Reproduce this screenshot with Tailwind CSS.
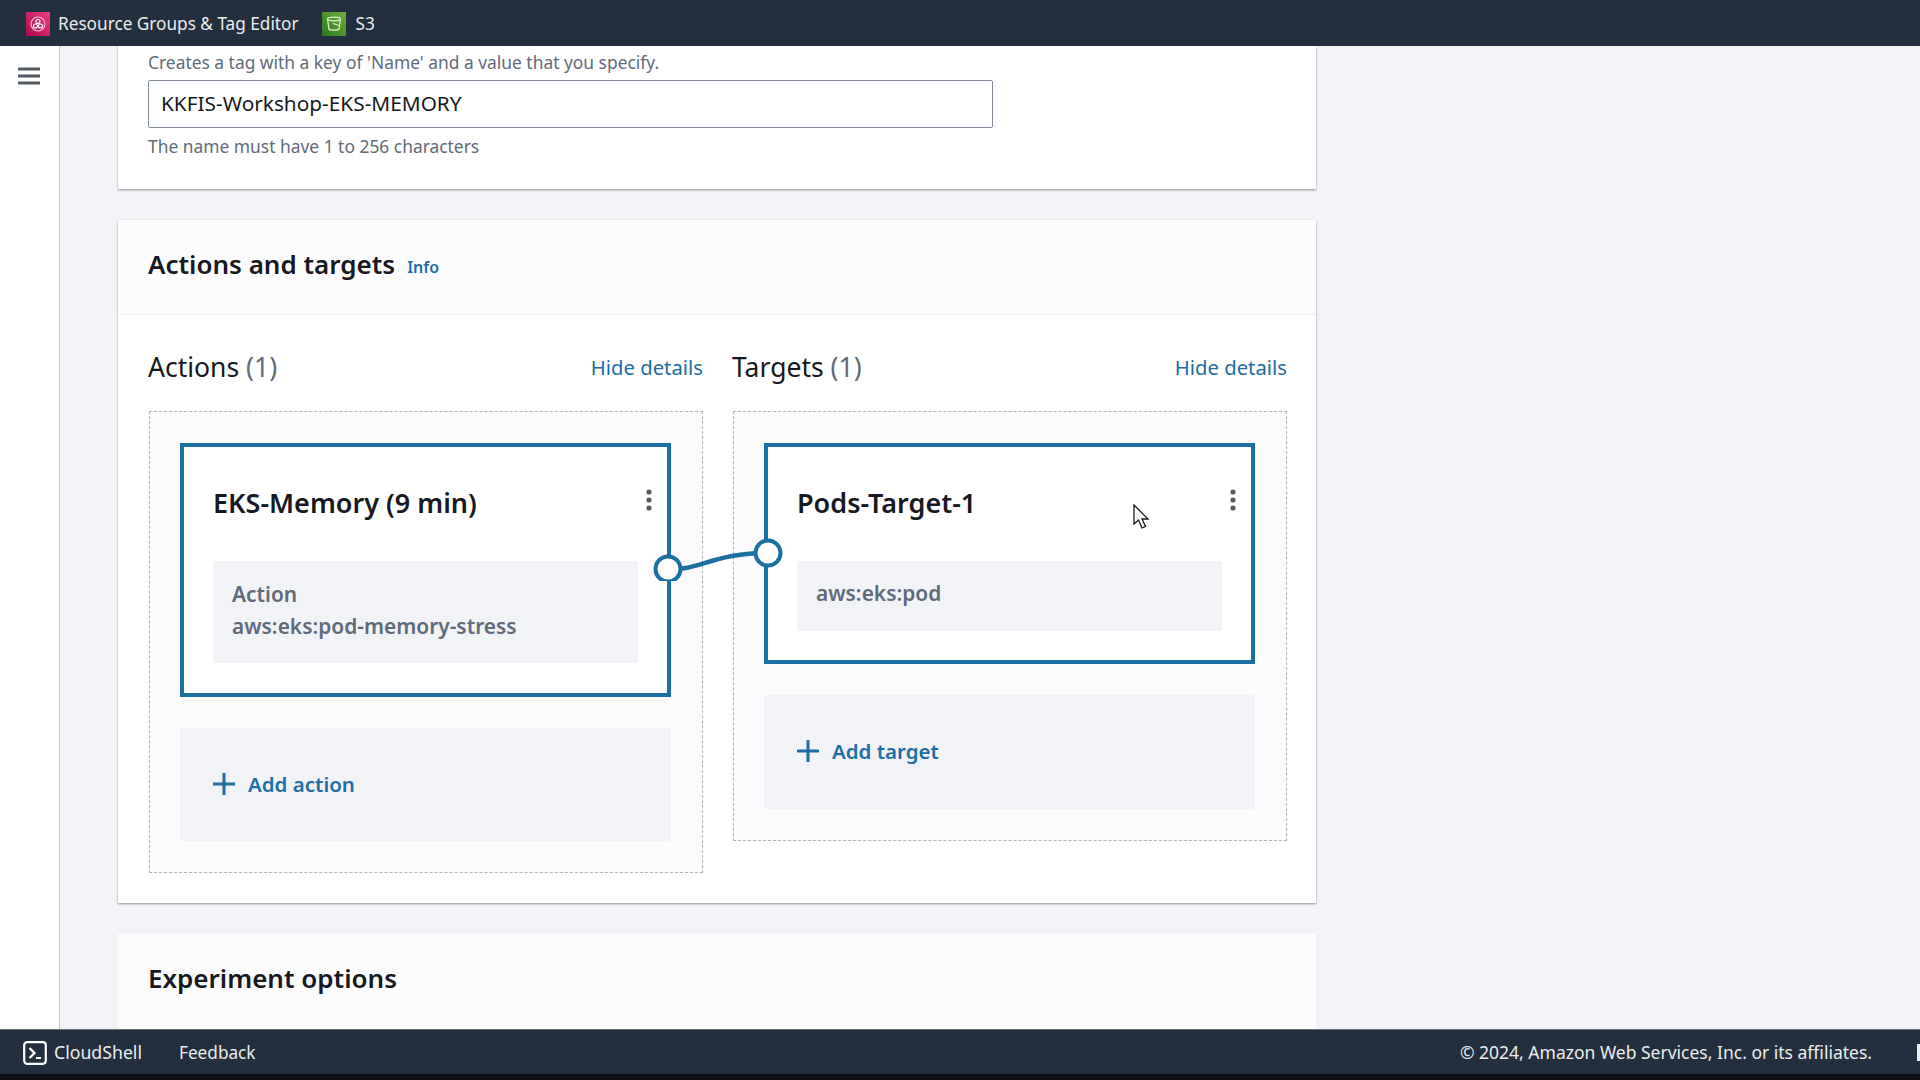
<!DOCTYPE html>
<html lang="en">
<head>
  <meta charset="UTF-8" />
  <title>Create experiment template</title>
  <script src="https://cdn.jsdelivr.net/npm/@tailwindcss/browser@4"></script>
</head>
<body class="relative w-[1920px] h-[1080px] overflow-hidden flex flex-col bg-[#0d1117] font-['Noto_Sans',sans-serif] text-[#16191f]">

<!-- top bar with pinned services -->
<header class="h-[46px] shrink-0 bg-[#232f3e] flex items-center pl-[26px] pt-[2px] text-[17.2px] text-[#eaeded]">
  <svg width="24" height="24" viewBox="0 0 24 24" class="mr-[8px]">
    <defs><linearGradient id="pink" x1="0" y1="1" x2="1" y2="0"><stop offset="0" stop-color="#b0084d"/><stop offset="1" stop-color="#e8417f"/></linearGradient></defs>
    <rect width="24" height="24" fill="url(#pink)"/>
    <circle cx="12" cy="12" r="7" fill="none" stroke="#f7c6d9" stroke-width="1.1"/>
    <circle cx="12" cy="9.500" r="2" fill="none" stroke="#fff" stroke-width="1.100"/>
    <circle cx="9.500" cy="14" r="2" fill="none" stroke="#fff" stroke-width="1.100"/>
    <circle cx="14.500" cy="14" r="2" fill="none" stroke="#fff" stroke-width="1.100"/>
  </svg>
  <span>Resource Groups &amp; Tag Editor</span>
  <svg width="24" height="24" viewBox="0 0 24 24" class="ml-[23px] mr-[10px]">
    <defs><linearGradient id="green" x1="0" y1="1" x2="1" y2="0"><stop offset="0" stop-color="#2a7a1c"/><stop offset="1" stop-color="#6cae3e"/></linearGradient></defs>
    <rect width="24" height="24" fill="url(#green)"/>
    <ellipse cx="12" cy="7" rx="6.500" ry="1.800" fill="none" stroke="#dff2c8" stroke-width="1.300"/>
    <path d="M5.500 7l1.500 10c.3 1.500 9.700 1.500 10 0l1.500-10" fill="none" stroke="#dff2c8" stroke-width="1.300"/>
    <path d="M11 11.500l6 2" fill="none" stroke="#dff2c8" stroke-width="1.200"/>
  </svg>
  <span>S3</span>
</header>

<div class="h-[983px] shrink-0 flex overflow-hidden">
  <!-- collapsed side nav -->
  <nav class="w-[60px] shrink-0 bg-white border-r border-[#c6c6cd] pt-[21px] pl-[18px]">
    <svg width="22" height="18" viewBox="0 0 22 18">
      <path d="M0 2h22M0 9h22M0 16h22" stroke="#545b64" stroke-width="3" fill="none"/>
    </svg>
  </nav>

  <main class="flex-1 bg-[#f3f3f7] pl-[58px]">
    <div class="w-[1198px] flex flex-col gap-[31px]">

      <!-- name tag section, scrolled partly out of view -->
      <section class="bg-white shadow-[0_1px_2px_#8d9199] h-[143px] px-[30px] pt-[4px]">
        <p class="text-[17.400px] leading-[24px] text-[#5f6b7a]">Creates a tag with a key of 'Name' and a value that you specify.</p>
        <div class="mt-[6px] w-[845px] h-[48px] border border-[#7d8998] rounded-[2px] flex items-center px-[12px] text-[20.800px] text-[#16191f]">KKFIS-Workshop-EKS-MEMORY</div>
        <p class="mt-[6px] text-[17.400px] leading-[24px] text-[#5f6b7a]">The name must have 1 to 256 characters</p>
      </section>

      <!-- actions and targets -->
      <section class="bg-white shadow-[0_1px_2px_#8d9199]">
        <div class="h-[95px] px-[30px] pb-[5px] flex items-center border-b border-[#f0f0f4] bg-[#fcfcfd]">
          <h2 class="text-[26px] font-semibold">Actions and targets</h2>
          <a class="ml-[12px] mt-[4px] text-[16px] font-semibold text-[#1c6ea4]">Info</a>
        </div>
        <div class="relative px-[30px] pt-[30px] pb-[30px] flex gap-[29px] items-start">

          <!-- actions column -->
          <div class="w-[555px]">
            <div class="h-[66px] flex justify-between items-start">
              <h3 class="text-[26.500px] leading-[44px]">Actions <span class="text-[#5f6b7a]">(1)</span></h3>
              <a class="text-[20.300px] leading-[45px] text-[#1c6ea4]">Hide details</a>
            </div>
            <div class="ml-[1px] border border-dashed border-[#aab7b8] bg-[#fbfbfd] pl-[30px] pr-[31px] py-[31px] flex flex-col gap-[31px]">
              <div class="relative h-[254px] border-[4px] border-[#1a6fa3] bg-white px-[29px] pt-[38px]">
                <div class="text-[27px] leading-[36px] font-semibold">EKS-Memory (9 min)</div>
                <svg width="6" height="22" viewBox="0 0 6 22" class="absolute right-[15px] top-[42px] fill-[#545b64]"><circle cx="3" cy="3" r="2.600"/><circle cx="3" cy="11" r="2.600"/><circle cx="3" cy="19" r="2.600"/></svg>
                <div class="mt-[40px] w-[425px] h-[102px] bg-[#f2f3f7] px-[19px] py-[17px] text-[20.900px] leading-[32px] font-semibold text-[#5f6b7a]">
                  <div>Action</div>
                  <div>aws:eks:pod-memory-stress</div>
                </div>
              </div>
              <div class="h-[113px] bg-[#f2f3f7] flex items-center pl-[33px] pb-[1px] gap-[13px] text-[#1c6ea4]">
                <svg width="22" height="22" viewBox="0 0 22 22"><path d="M11 0v22M0 11h22" stroke="currentColor" stroke-width="3" fill="none"/></svg>
                <span class="text-[20.500px] font-semibold">Add action</span>
              </div>
            </div>
          </div>

          <!-- targets column -->
          <div class="w-[555px]">
            <div class="h-[66px] flex justify-between items-start">
              <h3 class="text-[26.500px] leading-[44px]">Targets <span class="text-[#5f6b7a]">(1)</span></h3>
              <a class="text-[20.300px] leading-[45px] text-[#1c6ea4]">Hide details</a>
            </div>
            <div class="ml-[1px] border border-dashed border-[#aab7b8] bg-[#fbfbfd] pl-[30px] pr-[31px] py-[31px] flex flex-col gap-[31px]">
              <div class="relative h-[221px] border-[4px] border-[#1a6fa3] bg-white px-[29px] pt-[38px]">
                <div class="text-[27px] leading-[36px] font-semibold">Pods-Target-1</div>
                <svg width="6" height="22" viewBox="0 0 6 22" class="absolute right-[15px] top-[42px] fill-[#545b64]"><circle cx="3" cy="3" r="2.600"/><circle cx="3" cy="11" r="2.600"/><circle cx="3" cy="19" r="2.600"/></svg>
                <div class="mt-[40px] w-[425px] h-[70px] bg-[#f2f3f7] px-[19px] pb-[4px] flex items-center text-[20.900px] font-semibold text-[#5f6b7a]">aws:eks:pod</div>
              </div>
              <div class="h-[114px] bg-[#f2f3f7] flex items-center pl-[33px] pb-[2px] gap-[13px] text-[#1c6ea4]">
                <svg width="22" height="22" viewBox="0 0 22 22"><path d="M11 0v22M0 11h22" stroke="currentColor" stroke-width="3" fill="none"/></svg>
                <span class="text-[20.500px] font-semibold">Add target</span>
              </div>
            </div>
          </div>

          <!-- link between action and target -->
          <svg width="150" height="50" viewBox="0 0 150 50" class="absolute left-[532px] top-[216px]">
            <path d="M18 38C50 40 62 22 118 22" fill="none" stroke="#1a6fa3" stroke-width="4.500"/>
            <circle cx="18" cy="38" r="12.500" fill="#fff" stroke="#1a6fa3" stroke-width="4"/>
            <circle cx="118" cy="22" r="12.500" fill="#fff" stroke="#1a6fa3" stroke-width="4"/>
          </svg>
        </div>
      </section>

      <section class="bg-[#fcfcfd] h-[200px] px-[30px] pt-[24px]">
        <h2 class="text-[26px] leading-[40px] font-semibold">Experiment options</h2>
      </section>
    </div>
  </main>
</div>

<footer class="h-[45px] shrink-0 bg-[#232f3e] border-t border-[#687078] flex items-center pl-[23px] pt-[1px] text-[17.700px] text-[#eaeded]">
  <svg width="24" height="24" viewBox="0 0 24 24" class="mr-[7px]">
    <rect x="1.200" y="1.200" width="21.600" height="21.600" rx="3" fill="none" stroke="#fff" stroke-width="2.200"/>
    <path d="M6.500 7l5 5-5 5M13 17h5" fill="none" stroke="#fff" stroke-width="2.200"/>
  </svg>
  <span>CloudShell</span>
  <span class="ml-[37px] text-[17.200px]">Feedback</span>
  <span class="ml-auto text-[17.500px]">© 2024, Amazon Web Services, Inc. or its affiliates.</span>
  <span class="ml-[45px] w-[3px] h-[17px] bg-[#eaeded]"></span>
</footer>

<!-- mouse pointer from the recording -->
<svg width="18" height="26" viewBox="0 0 18 26" class="absolute left-[1133px] top-[504px]">
  <path d="M1 1v19l4.500-4 3.500 8 3.500-1.500-3.500-7.500h6z" fill="#fff" stroke="#16191f" stroke-width="1.300"/>
</svg>
</body>
</html>
